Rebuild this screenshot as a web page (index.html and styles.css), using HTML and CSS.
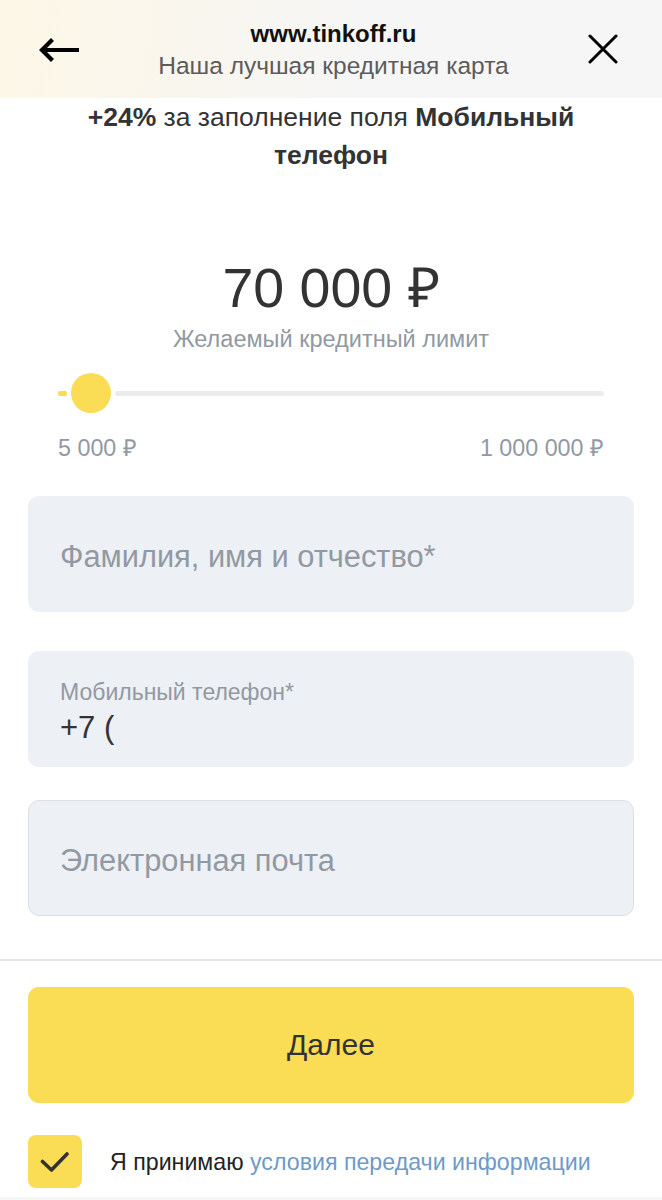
FILE: index.html
```html
<!DOCTYPE html>
<html lang="ru">
<head>
<meta charset="utf-8">
<title>Tinkoff</title>
<link rel="stylesheet" href="styles.css">
</head>
<body>
<div class="page">
  <header class="topbar">
    <svg class="icon-back" width="40" height="24" viewBox="0 0 40 24" aria-hidden="true">
      <path d="M38 12H4M12 3L3 12l9 9" fill="none" stroke="#000" stroke-width="4.2" stroke-linecap="square" stroke-linejoin="miter"/>
    </svg>
    <div class="topbar-title">
      <div class="site">www.tinkoff.ru</div>
      <div class="site-sub">Наша лучшая кредитная карта</div>
    </div>
    <svg class="icon-close" width="30" height="30" viewBox="0 0 30 30" aria-hidden="true">
      <path d="M2 2L28 28M28 2L2 28" fill="none" stroke="#000" stroke-width="3" stroke-linecap="round"/>
    </svg>
  </header>

  <main class="content">
    <p class="promo"><b>+24%</b> за заполнение поля <b>Мобильный</b> <b>телефон</b></p>

    <div class="amount">70 000 ₽</div>
    <div class="amount-label">Желаемый кредитный лимит</div>

    <div class="slider">
      <span class="slider-fill"></span>
      <span class="slider-thumb"></span>
      <span class="slider-track"></span>
    </div>
    <div class="range">
      <span>5 000 ₽</span>
      <span>1 000 000 ₽</span>
    </div>

    <div class="fields">
      <div class="field">
        <span class="placeholder">Фамилия, имя и отчество*</span>
      </div>
      <div class="field field-filled">
        <span class="field-label">Мобильный телефон*</span>
        <span class="field-value">+7 (</span>
      </div>
      <div class="field field-bordered">
        <span class="placeholder">Электронная почта</span>
      </div>
    </div>
  </main>

  <footer class="bottom">
    <button class="btn-next" type="button">Далее</button>
    <div class="consent">
      <span class="checkbox">
        <svg width="30" height="22" viewBox="0 0 30 22" aria-hidden="true">
          <path d="M2.5 10.5l9 8.5L27 3" fill="none" stroke="#333" stroke-width="3.6" stroke-linecap="round" stroke-linejoin="round"/>
        </svg>
      </span>
      <span class="consent-text">Я принимаю <a class="link" href="#">условия передачи информации</a></span>
    </div>
  </footer>
</div>
</body>
</html>
```

FILE: styles.css
```css
html {
  background: #f5f5f5;
}

body {
  margin: 0;
  font-family: "Liberation Sans", Arial, "Helvetica Neue", sans-serif;
  color: #333;
}

.page {
  background: #fff;
  padding-bottom: 9px;
}

.topbar {
  height: 98px;
  display: flex;
  align-items: center;
  justify-content: space-between;
  padding: 0 44px 0 39px;
  background: linear-gradient(100deg, #fcf7e6 0%, #f9f6ee 30%, #f6f6f6 55%, #f6f6f6 100%);
}

.icon-back {
  display: block;
  margin-top: 2px;
}

.icon-close {
  display: block;
}

.topbar-title {
  text-align: center;
  padding-top: 2px;
}

.site {
  font-size: 24px;
  font-weight: bold;
  color: #111;
  line-height: 30px;
}

.site-sub {
  font-size: 24.5px;
  color: #5c5c5c;
  line-height: 30px;
  margin-top: 2px;
}

.content {
  display: flex;
  flex-direction: column;
  align-items: center;
}

.promo {
  margin: 0;
  padding: 0 60px;
  font-size: 26.5px;
  line-height: 38px;
  text-align: center;
  color: #333;
}

.promo b {
  font-weight: bold;
}

.amount {
  margin-top: 82px;
  font-size: 55.5px;
  line-height: 64px;
  color: #333;
}

.amount-label {
  margin-top: 7px;
  font-size: 23.5px;
  line-height: 24px;
  color: #9299a2;
}

.slider {
  align-self: stretch;
  margin: 22px 58px 0;
  height: 40px;
  display: flex;
  align-items: center;
  gap: 4px;
}

.slider-fill {
  width: 9px;
  height: 5px;
  border-radius: 2px;
  background: #fbdd55;
}

.slider-thumb {
  width: 40px;
  height: 40px;
  border-radius: 50%;
  background: #fbdd55;
}

.slider-track {
  flex: 1;
  height: 5px;
  border-radius: 2px;
  background: #ececec;
}

.range {
  align-self: stretch;
  margin: 22px 58px 0;
  display: flex;
  justify-content: space-between;
  font-size: 23.3px;
  line-height: 26px;
  color: #9299a2;
}

.fields {
  align-self: stretch;
  margin: 35px 28px 0;
  display: flex;
  flex-direction: column;
  gap: 39px;
}

.field {
  box-sizing: border-box;
  height: 116px;
  border-radius: 11px;
  background: #edf0f4;
  padding: 0 32px;
  display: flex;
  flex-direction: column;
  justify-content: center;
}

.field-bordered {
  border: 1px solid #dcdfe4;
  padding: 0 31px;
  margin-top: -6px;
}

.placeholder {
  font-size: 30.8px;
  line-height: 36px;
  color: #9299a2;
  padding-top: 5px;
}

.field-label {
  font-size: 23px;
  line-height: 26px;
  color: #9299a2;
  padding-top: 7px;
}

.field-value {
  font-size: 31px;
  line-height: 36px;
  color: #333;
  margin-top: 5px;
}

.bottom {
  margin-top: 43px;
  border-top: 2px solid #e3e3e3;
  padding: 26px 28px 0;
}

.btn-next {
  display: block;
  width: 100%;
  height: 116px;
  border: 0;
  border-radius: 11px;
  background: #fbdd55;
  font-family: inherit;
  font-size: 30px;
  color: #333;
  cursor: pointer;
}

.consent {
  margin-top: 32px;
  display: flex;
  align-items: center;
  gap: 28px;
}

.checkbox {
  width: 54px;
  height: 53px;
  border-radius: 8px;
  background: #fbdd55;
  display: flex;
  align-items: center;
  justify-content: center;
  flex: none;
}

.checkbox svg {
  display: block;
  margin-top: 1px;
}

.consent-text {
  font-size: 23.2px;
  line-height: 28px;
  color: #222;
}

.link {
  color: #6e9ac8;
  text-decoration: none;
}
```
